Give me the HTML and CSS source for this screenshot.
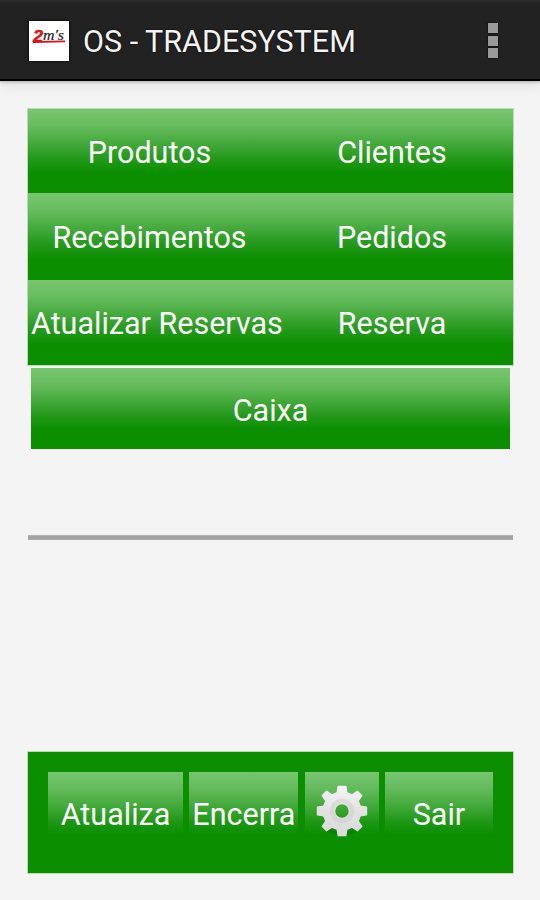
FILE: index.html
```html
<!DOCTYPE html>
<html lang="pt-BR">
<head>
    <meta charset="UTF-8">
    <meta name="viewport" content="width=device-width, initial-scale=1.0">
    <title>OS - TRADESYSTEM</title>
    <link rel="stylesheet" href="styles.css">
</head>
<body>
    <header class="topbar">
        <svg class="logo" viewBox="0 0 40 40">
            <rect width="40" height="40" fill="#fff"/>
            <text class="logo-number" x="4" y="20.5" textLength="10" lengthAdjust="spacingAndGlyphs">2</text>
            <text class="logo-name" x="14" y="18.5" textLength="21" lengthAdjust="spacingAndGlyphs">m's</text>
            <path d="M4 20 L36 19.6 L36 21.2 L4 22 Z" fill="#d9141c"/>
        </svg>
        <h1 class="title">OS - TRADESYSTEM</h1>
        <div class="overflow"><span></span><span></span><span></span></div>
    </header>

    <main class="content">
        <div class="menu">
            <div class="row"><button>Produtos</button><button>Clientes</button></div>
            <div class="row"><button>Recebimentos</button><button>Pedidos</button></div>
            <div class="row"><button class="wide-label">Atualizar Reservas</button><button>Reserva</button></div>
        </div>
        <button class="caixa">Caixa</button>
        <hr class="divider">

        <footer class="actions">
            <button>Atualiza</button>
            <button>Encerra</button>
            <button class="settings" aria-label="settings">
                <svg class="gear" viewBox="0 0 54 54">
                    <defs>
                        <linearGradient id="metal" x1="0" y1="0" x2="0" y2="1">
                            <stop offset="0" stop-color="#f5f5f5"/>
                            <stop offset="0.5" stop-color="#e2e2e2"/>
                            <stop offset="1" stop-color="#dadada"/>
                        </linearGradient>
                    </defs>
                    <ellipse cx="27" cy="47" rx="16" ry="5" fill="#087500" opacity="0.45"/>
                    <path fill="url(#metal)" stroke="url(#metal)" stroke-width="1.4" stroke-linejoin="round" fill-rule="evenodd" d="M23 1.5 H31 L32 8 L37.5 10.3 L43 6.5 L47.5 11 L43.8 16.5 L46 22 L52.5 23 V31 L46 32 L43.8 37.5 L47.5 43 L43 47.5 L37.5 43.8 L32 46 L31 52.5 H23 L22 46 L16.5 43.8 L11 47.5 L6.5 43 L10.2 37.5 L8 32 L1.5 31 V23 L8 22 L10.2 16.5 L6.5 11 L11 6.5 L16.5 10.3 L22 8 Z M27 19.3 A7.7 7.7 0 1 0 27 34.7 A7.7 7.7 0 1 0 27 19.3 Z"/>
                    <circle cx="27" cy="27" r="10.5" fill="none" stroke="#c8c8c8" stroke-width="4.5" opacity="0.4"/>
                </svg>
            </button>
            <button>Sair</button>
        </footer>
    </main>
</body>
</html>
```

FILE: styles.css
```css
* { box-sizing: border-box; }
body { margin: 0; height: 900px; background: #f4f4f4; font-family: Roboto, sans-serif; overflow: hidden; }
button {
    font: inherit;
    color: #fff;
    border: 0;
    padding: 0;
    white-space: nowrap;
    cursor: pointer;
}

.topbar {
    display: flex;
    align-items: center;
    height: 81px;
    padding: 2px 42px 0 29px;
    background: #222;
    border-bottom: 2px solid #000;
    box-shadow: inset 0 2px 1px #2c2c2c, 0 1px 3px #aaa, 0 3px 14px #ddd;
}
.logo { width: 40px; height: 40px; margin-right: 14px; box-shadow: 0 0 3px #000; }
.logo-number { font: italic bold 16px "Liberation Sans", sans-serif; fill: #d9141c; stroke: #d9141c; stroke-width: 0.5px; }
.logo-name { font: italic 15px "Liberation Serif", serif; fill: #222; stroke: #222; stroke-width: 0.2px; }
.title {
    flex: 1;
    margin: 0;
    padding-top: 2px;
    font-size: 30.5px;
    font-weight: 400;
    color: #f3f3f3;
    text-shadow: 0 0 2px #000;
}
.overflow { display: grid; gap: 2.5px; }
.overflow span { width: 10px; height: 10px; background: #999; box-shadow: 0 0 2px #000; }

.content { padding: 28px 27px 0 28px; font-size: 30.5px; }
.row, .caixa {
    background: linear-gradient(#78c56f, #6abd61 18%, #4fb047 34%, #25991d 58%, #0b8f00 76%, #0b8f00);
}
.menu { display: grid; grid-template-rows: 84px 87px 85px; outline: 1px solid #b8dcb4; }
.row { display: grid; grid-template-columns: 243px 242px; }
.row button { background: none; padding-top: 2px; }
.row .wide-label { padding-left: 3px; text-align: left; }
.caixa { display: block; width: 479px; height: 81px; margin: 3px 0 0 3px; padding-top: 3px; }
.divider {
    height: 5px;
    margin: 86px 0 212px;
    border: 0;
    background: linear-gradient(#b8b8b8, #a0a0a0 40%, #acacac);
}

.actions {
    display: grid;
    grid-template-columns: 135px 109px 74px 108px;
    justify-content: space-between;
    height: 121px;
    padding: 20px;
    background: #0b8f00;
    outline: 1px solid #b8dcb4;
}
.actions button {
    height: 80px;
    padding-top: 4px;
    background: linear-gradient(#78c56f, #62b95a 18px, #42a93a 34px, #1e9715 50px, #0b8f00 62px);
}
.actions .settings { display: grid; place-items: center; padding: 0 0 2px 1px; }
.gear { width: 52px; height: 52px; }
```
